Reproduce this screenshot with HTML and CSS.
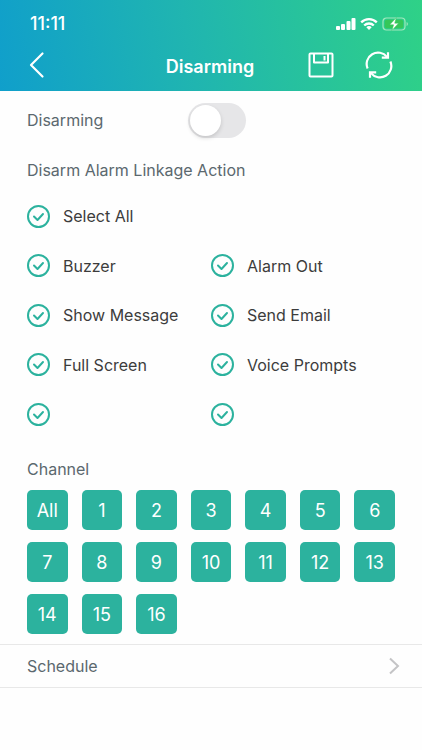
FILE: index.html
```
<!DOCTYPE html>
<html lang="en">
<head>
  <meta charset="UTF-8">
  <meta name="viewport" content="width=device-width, initial-scale=1.0">
  <title>Disarming</title>
  <link rel="stylesheet" href="styles.css">
</head>

<body>

  <header class="header">
    <div class="status-bar">
      <span class="time">11:11</span>
      <div class="status-icons">
        <svg width="20" height="14" viewBox="0 0 20 14" fill="#fff">
          <rect x="0" y="9" width="4" height="4" rx="1"/>
          <rect x="5" y="7" width="4" height="6" rx="1"/>
          <rect x="10.5" y="4" width="4" height="9" rx="1"/>
          <rect x="15.5" y="1" width="4" height="12" rx="1"/>
        </svg>
        <svg width="18" height="14" viewBox="0 0 18 14" fill="none" stroke="#fff" stroke-width="2.3">
          <path d="M1.2 5.4a11 11 0 0 1 15.6 0"/>
          <path d="M4.2 8.5a6.8 6.8 0 0 1 9.6 0"/>
          <path d="M9 13 6.3 10.3a3.9 3.9 0 0 1 5.4 0z" fill="#fff" stroke="none"/>
        </svg>
        <svg width="27" height="14" viewBox="0 0 27 14">
          <rect x="1" y="1" width="22" height="12" rx="3.5" fill="none" stroke="#a2e8bd" stroke-width="1.2"/>
          <rect x="2.8" y="2.8" width="18.4" height="8.4" rx="2" fill="#35c759"/>
          <path d="M24.6 5v4c1.7-.6 1.7-3.4 0-4z" fill="#a2e8bd"/>
          <path d="M14.4.6 7.7 7.8h3.9L9.9 13.4l6.7-7.2h-3.9z" fill="#fff" stroke="#35c759" stroke-width=".5"/>
        </svg>
      </div>
    </div>

    <div class="nav-bar">
      <button type="button" class="icon-button back-button" aria-label="Back">
        <svg width="28" height="28" viewBox="0 0 28 28" fill="none" stroke="#fff" stroke-width="2.2" stroke-linecap="round" stroke-linejoin="round">
          <path d="M15.5 2.5 4 14l11.5 11.5"/>
        </svg>
      </button>
      <h1>Disarming</h1>
      <div class="nav-actions">
        <button type="button" class="icon-button" aria-label="Save">
          <svg width="28" height="28" viewBox="0 0 28 28" fill="none" stroke="#fff" stroke-width="2" stroke-linejoin="round">
            <rect x="2.5" y="2.5" width="23" height="23" rx="1"/>
            <path d="M7 2.5v9h14v-9"/>
            <path d="M17.5 5v4.5"/>
          </svg>
        </button>
        <button type="button" class="icon-button" aria-label="Refresh">
          <svg width="28" height="28" viewBox="0 0 28 28" fill="none" stroke="#fff" stroke-width="2.2">
            <path d="M2.6 17.5A11.4 11.4 0 0 1 22 5.9"/>
            <path d="M16.8 6.7h6.2V1.2"/>
            <path d="M25.4 10.5A11.4 11.4 0 0 1 6 22.1"/>
            <path d="M11.2 21.3H5v5.5"/>
          </svg>
        </button>
      </div>
    </div>
  </header>

  <main>
    <div class="switch-row">
      <label for="disarming">Disarming</label>
      <input type="checkbox" role="switch" id="disarming" class="switch">
    </div>

    <section class="section">
      <h2>Disarm Alarm Linkage Action</h2>
      <label class="option select-all"><input type="checkbox" checked> Select All</label>
      <div class="options">
        <label class="option"><input type="checkbox" checked> Buzzer</label>
        <label class="option"><input type="checkbox" checked> Alarm Out</label>
        <label class="option"><input type="checkbox" checked> Show Message</label>
        <label class="option"><input type="checkbox" checked> Send Email</label>
        <label class="option"><input type="checkbox" checked> Full Screen</label>
        <label class="option"><input type="checkbox" checked> Voice Prompts</label>
        <label class="option"><input type="checkbox" aria-label="Option 7" checked></label>
        <label class="option"><input type="checkbox" aria-label="Option 8" checked></label>
      </div>
    </section>

    <section class="section">
      <h2 class="channel-title">Channel</h2>
      <div class="channels">
        <button type="button" class="channel">All</button>
        <button type="button" class="channel">1</button>
        <button type="button" class="channel">2</button>
        <button type="button" class="channel">3</button>
        <button type="button" class="channel">4</button>
        <button type="button" class="channel">5</button>
        <button type="button" class="channel">6</button>
        <button type="button" class="channel">7</button>
        <button type="button" class="channel">8</button>
        <button type="button" class="channel">9</button>
        <button type="button" class="channel">10</button>
        <button type="button" class="channel">11</button>
        <button type="button" class="channel">12</button>
        <button type="button" class="channel">13</button>
        <button type="button" class="channel">14</button>
        <button type="button" class="channel">15</button>
        <button type="button" class="channel">16</button>
      </div>
    </section>

    <a href="#schedule" class="link-row">
      Schedule
      <svg width="12" height="18" viewBox="0 0 12 18" fill="none" stroke="#c4c4c6" stroke-width="2">
        <path d="M2 1.5 10 9l-8 7.5"/>
      </svg>
    </a>
  </main>

</body>
</html>
```

FILE: styles.css
```
* { box-sizing: border-box; }
body {
  margin: 0;
  font-family: Inter, Roboto, sans-serif;
  font-size: 16px;
  line-height: 20px;
  background-color: #fefefe;
  color: #3c3c3c;
}
h1, h2 { margin: 0; }

/* header */
.header {
  background: linear-gradient(80deg, #109fcb 0%, #20b5b0 45%, #2fd187 100%);
  color: #fff;
  padding-top: 14px;
}
.status-bar {
  display: flex; align-items: center; justify-content: space-between;
  height: 20px; padding: 0 13px 0 30px;
}
.time { font-size: 18px; font-weight: 500; }
.status-icons { display: flex; align-items: center; gap: 4px; }
.nav-bar {
  display: grid; grid-template-columns: 1fr auto 1fr; align-items: center;
  height: 57px; padding: 8px 29px 0 27px;
}
.nav-bar h1 { font-size: 18px; font-weight: 600; line-height: 24px; }
.nav-actions { display: flex; justify-content: flex-end; gap: 30px; }
.icon-button {
  display: block; padding: 0; border: none;
  background: none; cursor: pointer;
}
.back-button { justify-self: start; }

/* disarming switch */
.switch-row {
  display: flex; align-items: center;
  height: 58px; padding: 0 27px;
  color: #5b686e;
}
.switch-row label { width: 161px; }
.switch {
  appearance: none;
  width: 58px; height: 35px; margin: 0; padding: 2px;
  border-radius: 18px; background-color: #e6e6e8;
  cursor: pointer;
}
.switch::before {
  content: ""; display: block;
  width: 31px; height: 31px; border-radius: 50%;
  background-color: #fff; box-shadow: 0 2px 4px rgba(0, 0, 0, 0.15);
}
.switch:checked { background-color: #2cb29e; }
.switch:checked::before { margin-left: auto; }

/* sections */
.section { padding: 0 27px; }
.section h2 {
  padding: 11px 0;
  font-size: 16px; font-weight: 400; color: #5b686e;
}
.section .channel-title { padding: 20px 0 11px; }

.options {
  display: grid; grid-template-columns: 1fr 1fr; grid-template-rows: repeat(4, 1fr);
  height: 198px;
}
.option { display: flex; align-items: center; gap: 13px; cursor: pointer; }
.select-all { height: 50px; }
.option input {
  appearance: none; flex: none;
  width: 23px; height: 23px; margin: 0;
  border: 2px solid #2cb29e; border-radius: 50%;
  cursor: pointer;
}
.option input:checked {
  background: url("data:image/svg+xml,%3Csvg xmlns='http://www.w3.org/2000/svg' viewBox='0 0 19 19' fill='none' stroke='%232cb29e' stroke-width='2' stroke-linecap='round' stroke-linejoin='round'%3E%3Cpath d='M5 9.500 8.500 13 14 7'/%3E%3C/svg%3E") center / 19px 19px no-repeat;
}

/* channel buttons */
.channels {
  display: grid; grid-template-columns: repeat(7, 1fr); gap: 12px 14px;
  padding-bottom: 10px;
}
.channel {
  height: 40px; padding: 0;
  border: none; border-radius: 5px;
  background-color: #2cb29e; color: #fff;
  font-family: inherit; font-size: 18px;
  cursor: pointer;
}

.link-row {
  display: flex; align-items: center; justify-content: space-between;
  height: 44px; padding: 0 22px 0 27px;
  border-top: 1px solid #e8e8e8; border-bottom: 1px solid #e8e8e8;
  color: #5b686e; text-decoration: none;
}
```
